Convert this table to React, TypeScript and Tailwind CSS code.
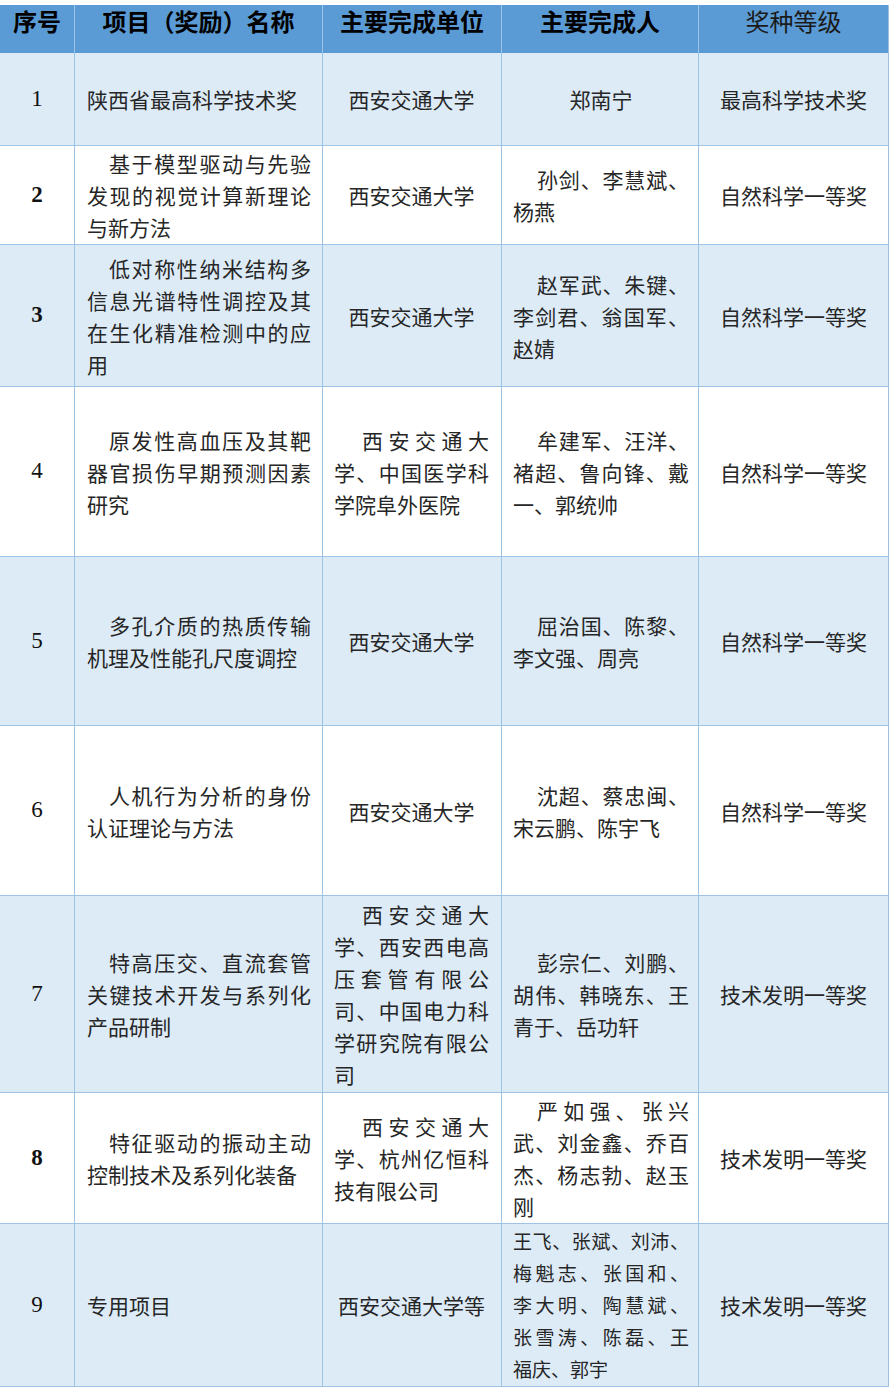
import React from "react";

type Lines = { lines: string[]; ind?: string; small?: boolean };

const rows: {
  n: string;
  nb?: boolean;
  h: string;
  bg: string;
  c2: Lines | string;
  c3: Lines | string;
  c4: Lines | string;
  c5: string;
}[] = [
  { n: "1", h: "h-[93px]", bg: "bg-[#ddebf7]", c2: "陕西省最高科学技术奖", c3: "西安交通大学", c4: "郑南宁", c5: "最高科学技术奖" },
  {
    n: "2", nb: true, h: "h-[99px]", bg: "bg-white",
    c2: { lines: ["基于模型驱动与先验", "发现的视觉计算新理论", "与新方法"] },
    c3: "西安交通大学",
    c4: { lines: ["孙剑、李慧斌、", "杨燕"] },
    c5: "自然科学一等奖",
  },
  {
    n: "3", nb: true, h: "h-[142px]", bg: "bg-[#ddebf7]",
    c2: { lines: ["低对称性纳米结构多", "信息光谱特性调控及其", "在生化精准检测中的应", "用"] },
    c3: "西安交通大学",
    c4: { lines: ["赵军武、朱键、", "李剑君、翁国军、", "赵婧"] },
    c5: "自然科学一等奖",
  },
  {
    n: "4", h: "h-[170px]", bg: "bg-white",
    c2: { lines: ["原发性高血压及其靶", "器官损伤早期预测因素", "研究"] },
    c3: { lines: ["西安交通大", "学、中国医学科", "学院阜外医院"] },
    c4: { lines: ["牟建军、汪洋、", "褚超、鲁向锋、戴", "一、郭统帅"] },
    c5: "自然科学一等奖",
  },
  {
    n: "5", h: "h-[169px]", bg: "bg-[#ddebf7]",
    c2: { lines: ["多孔介质的热质传输", "机理及性能孔尺度调控"] },
    c3: "西安交通大学",
    c4: { lines: ["屈治国、陈黎、", "李文强、周亮"] },
    c5: "自然科学一等奖",
  },
  {
    n: "6", h: "h-[170px]", bg: "bg-white",
    c2: { lines: ["人机行为分析的身份", "认证理论与方法"] },
    c3: "西安交通大学",
    c4: { lines: ["沈超、蔡忠闽、", "宋云鹏、陈宇飞"] },
    c5: "自然科学一等奖",
  },
  {
    n: "7", h: "h-[197px]", bg: "bg-[#ddebf7]",
    c2: { lines: ["特高压交、直流套管", "关键技术开发与系列化", "产品研制"] },
    c3: { lines: ["西安交通大", "学、西安西电高", "压套管有限公", "司、中国电力科", "学研究院有限公", "司"] },
    c4: { lines: ["彭宗仁、刘鹏、", "胡伟、韩晓东、王", "青于、岳功轩"] },
    c5: "技术发明一等奖",
  },
  {
    n: "8", nb: true, h: "h-[131px]", bg: "bg-white",
    c2: { lines: ["特征驱动的振动主动", "控制技术及系列化装备"] },
    c3: { lines: ["西安交通大", "学、杭州亿恒科", "技有限公司"] },
    c4: { lines: ["严如强、张兴", "武、刘金鑫、乔百", "杰、杨志勃、赵玉", "刚"] },
    c5: "技术发明一等奖",
  },
  {
    n: "9", h: "h-[163px]", bg: "bg-[#ddebf7]",
    c2: "专用项目",
    c3: "西安交通大学等",
    c4: { lines: ["王飞、张斌、刘沛、", "梅魁志、张国和、", "李大明、陶慧斌、", "张雪涛、陈磊、王", "福庆、郭宇"], ind: "none", small: true },
    c5: "技术发明一等奖",
  },
];

const cellBase = "border-r border-[#9dc3e6] flex flex-col justify-center";

function Para({ l, indentCls, small }: { l: string[]; indentCls: string; small?: boolean }) {
  return (
    <div className={small ? "text-[19px] leading-[32px]" : "text-[21px] leading-[32px]"}>
      {l.map((s, i) => {
        const last = i === l.length - 1;
        const cls = [
          i === 0 ? indentCls : "",
          last ? "text-left" : "text-justify [text-align-last:justify]",
        ].join(" ");
        return (
          <div key={i} className={cls}>
            {s}
          </div>
        );
      })}
    </div>
  );
}

function Content({ v, col }: { v: Lines | string; col: 2 | 3 | 4 }) {
  if (typeof v === "string") {
    if (col === 2) return <div className="text-[21px] leading-[32px] text-left">{v}</div>;
    return <div className="text-[21px] leading-[32px] text-center">{v}</div>;
  }
  const indentCls =
    v.ind === "none" ? "" : col === 2 ? "pl-[22px]" : col === 3 ? "pl-[28px]" : "pl-[24px]";
  return <Para l={v.lines} indentCls={indentCls} small={v.small} />;
}

export default function App() {
  return (
    <div className="w-[895px] h-[1393px] bg-white pt-[5px] font-['Noto_Sans_CJK_SC',sans-serif] text-[#262626]">
      <div className="w-[889px]">
        {/* header */}
        <div className="grid grid-cols-[75px_248px_179px_197px_190px] h-[48px] bg-[#5b9bd5] text-black text-[24px] leading-[32px]">
          <div className="border-r border-[#9dc3e6] text-center font-bold">序号</div>
          <div className="border-r border-[#9dc3e6] text-center font-bold">项目（奖励）名称</div>
          <div className="border-r border-[#9dc3e6] text-center font-bold">主要完成单位</div>
          <div className="border-r border-[#9dc3e6] text-center font-bold">主要完成人</div>
          <div className="border-r border-[#9dc3e6] text-center font-normal text-[#1a1a1a]">奖种等级</div>
        </div>
        {rows.map((r) => (
          <div
            key={r.n}
            className={`grid grid-cols-[75px_248px_179px_197px_190px] border-b border-[#9dc3e6] ${r.h} ${r.bg}`}
          >
            <div className={`${cellBase} items-center`}>
              <span
                className={`font-['Liberation_Serif',serif] text-[23px] text-[#111] ${r.nb ? "font-bold" : ""}`}
              >
                {r.n}
              </span>
            </div>
            <div className={`${cellBase} pl-[12px] pr-[11px]`}>
              <Content v={r.c2} col={2} />
            </div>
            <div className={`${cellBase} pl-[11px] pr-[12px]`}>
              <Content v={r.c3} col={3} />
            </div>
            <div className={`${cellBase} pl-[11px] pr-[9px]`}>
              <Content v={r.c4} col={4} />
            </div>
            <div className={`${cellBase} items-center`}>
              <div className="text-[21px] leading-[32px]">{r.c5}</div>
            </div>
          </div>
        ))}
      </div>
    </div>
  );
}
